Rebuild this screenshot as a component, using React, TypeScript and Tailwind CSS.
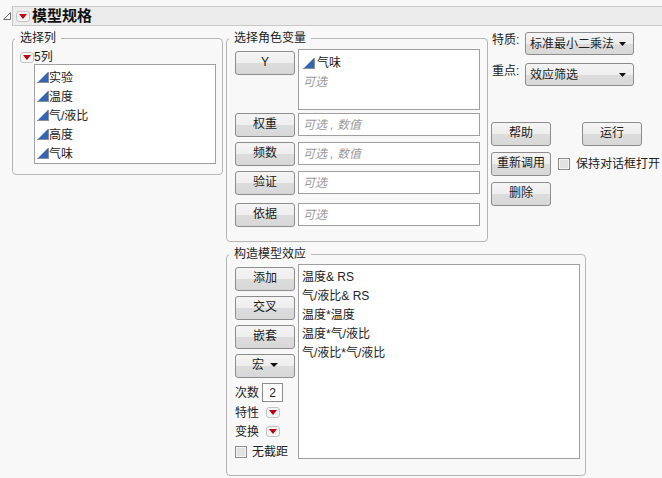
import type { ReactNode } from 'react'

const font = '[font-family:"Liberation_Sans","Noto_Sans_CJK_SC",sans-serif]'

function RedButton({ className = '' }: { className?: string }): React.JSX.Element {
  return (
    <span
      className={`flex h-[11px] w-[14px] shrink-0 items-center justify-center rounded-[3px] border border-[#c4c4c4] bg-[#f4f4f4] ${className}`}
    >
      <svg width="8" height="5" viewBox="0 0 8 5">
        <path d="M0 0h8L4 5z" fill="#c00010" />
      </svg>
    </span>
  )
}

function ColIcon(): React.JSX.Element {
  return (
    <svg width="12" height="11" viewBox="0 0 12 11" className="shrink-0">
      <path d="M0 11 11 0v11z" fill="#3265b4" />
      <path d="M11 0h1v11H0v-1h11z" fill="#8a8f98" />
    </svg>
  )
}

function Btn({ children, className = '' }: { children: ReactNode; className?: string }): React.JSX.Element {
  return (
    <div
      className={`flex h-6 w-[60px] shrink-0 items-center justify-center rounded-[3px] border border-[#8c8c8c] bg-[linear-gradient(#f4f4f4_0%,#eeeeee_50%,#dcdcdc_52%,#d8d8d8_100%)] pb-[3px] text-xs text-[#1a1a1a] ${className}`}
    >
      {children}
    </div>
  )
}

function Panel({
  title,
  className,
  children,
}: {
  title: string
  className: string
  children: ReactNode
}): React.JSX.Element {
  return (
    <div className={`relative rounded-[4px] border border-[#b4b4b4] ${className}`}>
      <span className="absolute top-[-10px] left-[2px] bg-[#f8f8f8] pr-[5px] pl-[5px] text-xs leading-[18px] text-[#222]">
        {title}
      </span>
      {children}
    </div>
  )
}

function Slot({ text, className = '' }: { text: string; className?: string }): React.JSX.Element {
  return (
    <div
      className={`flex h-[23px] w-[182px] items-center border border-[#a0a0a0] bg-white pl-[4px] text-xs text-[#9a9a9a] italic ${className}`}
    >
      {text}
    </div>
  )
}

function CheckBox(): React.JSX.Element {
  return (
    <span className="block h-3 w-3 shrink-0 border border-[#8c8c8c] bg-[#e2e2e2] shadow-[inset_0_0_0_1px_#f4f4f4]" />
  )
}

function Select({ text, className = '' }: { text: string; className?: string }): React.JSX.Element {
  return (
    <div
      className={`flex h-[23px] w-[109px] items-center justify-between rounded-[3px] border border-[#8c8c8c] bg-[linear-gradient(#f4f4f4_0%,#eeeeee_50%,#dcdcdc_52%,#d8d8d8_100%)] pr-[7px] pl-[4px] text-xs text-[#222] ${className}`}
    >
      <span>{text}</span>
      <svg width="7" height="4" viewBox="0 0 7 4">
        <path d="M0 0h7L3.5 4z" fill="#111" />
      </svg>
    </div>
  )
}

const columns = ['实验', '温度', '气/液比', '高度', '气味']
const effects = ['温度& RS', '气/液比& RS', '温度*温度', '温度*气/液比', '气/液比*气/液比']

export default function App(): React.JSX.Element {
  return (
    <div className={`h-[478px] w-[662px] overflow-hidden bg-[#f8f8f8] pt-[6px] ${font}`}>
      {/* title bar */}
      <div className="flex items-center">
        <svg width="10" height="10" viewBox="0 0 10 10" className="ml-[2px] shrink-0">
          <path d="M8.5 1.5v7h-7z" fill="none" stroke="#707070" />
        </svg>
        <div className="flex h-[20px] flex-1 items-center border border-r-0 border-[#c8c8c8] bg-[#ececec] pl-[3px]">
          <RedButton />
          <span className="ml-[2px] text-[15px] leading-[18px] font-bold text-[#111]">模型规格</span>
        </div>
      </div>

      <div className="mt-[12px] flex items-start pl-[12px]">
        {/* column picker */}
        <Panel title="选择列" className="h-[137px] w-[211px] shrink-0">
          <div className="mt-[11px] ml-[7px] flex items-center">
            <RedButton />
            <span className="text-xs leading-[14px] text-[#222]">5列</span>
          </div>
          <div className="ml-[21px] h-[100px] w-[182px] border border-[#a0a0a0] bg-white pt-[3px] pl-[2px]">
            {columns.map((name) => (
              <div key={name} className="flex h-[19px] items-center text-xs text-[#222]">
                <ColIcon />
                <span>{name}</span>
              </div>
            ))}
          </div>
        </Panel>

        <div className="ml-[3px] flex w-[360px] shrink-0 flex-col">
          {/* role variables */}
          <Panel title="选择角色变量" className="h-[204px] w-[262px]">
            <div className="mt-[10px] ml-[8px] flex flex-col">
              <div className="flex gap-[3px]">
                <Btn className="mt-[2px]">Y</Btn>
                <div className="h-[61px] w-[182px] border border-[#a0a0a0] bg-white pt-[5px] pl-[4px]">
                  <div className="flex items-center text-xs text-[#222]">
                    <ColIcon />
                    <span className="ml-[2px]">气味</span>
                  </div>
                  <div className="mt-[3px] text-xs text-[#9a9a9a] italic">可选</div>
                </div>
              </div>
              <div className="mt-[3px] flex gap-[3px]">
                <Btn>权重</Btn>
                <Slot text="可选 , 数值" />
              </div>
              <div className="mt-[5px] flex gap-[3px]">
                <Btn>频数</Btn>
                <Slot text="可选 , 数值" />
              </div>
              <div className="mt-[5px] flex gap-[3px]">
                <Btn>验证</Btn>
                <Slot text="可选" />
              </div>
              <div className="mt-[8px] flex gap-[3px]">
                <Btn>依据</Btn>
                <Slot text="可选" />
              </div>
            </div>
          </Panel>

          {/* model effects */}
          <Panel title="构造模型效应" className="mt-[12px] h-[222px] w-[360px]">
            <div className="mt-[9px] ml-[8px] flex gap-[3px]">
              <div className="flex w-[60px] shrink-0 flex-col">
                <div className="mt-[3px] flex flex-col gap-[5px]">
                  <Btn>添加</Btn>
                  <Btn>交叉</Btn>
                  <Btn>嵌套</Btn>
                  <Btn>
                    <span>宏</span>
                    <svg width="8" height="4" viewBox="0 0 8 4" className="ml-[6px]">
                      <path d="M0 0h8L4 4z" fill="#111" />
                    </svg>
                  </Btn>
                </div>
                <div className="mt-[5px] flex items-center text-xs text-[#222]">
                  <span>次数</span>
                  <span className="ml-[3px] flex h-[19px] w-[21px] items-center justify-center border border-[#8c8c8c] bg-white">
                    2
                  </span>
                </div>
                <div className="mt-[1px] flex h-[19px] items-center text-xs text-[#222]">
                  <span>特性</span>
                  <RedButton className="ml-[7px]" />
                </div>
                <div className="flex h-[19px] items-center text-xs text-[#222]">
                  <span>变换</span>
                  <RedButton className="ml-[7px]" />
                </div>
                <div className="mt-[3px] flex items-center text-xs text-[#222]">
                  <CheckBox />
                  <span className="ml-[5px] whitespace-nowrap">无截距</span>
                </div>
              </div>
              <div className="h-[195px] w-[282px] border border-[#a0a0a0] bg-white pt-[3px] pl-[3px]">
                {effects.map((e) => (
                  <div key={e} className="h-[19px] text-xs leading-[19px] text-[#222]">
                    {e}
                  </div>
                ))}
              </div>
            </div>
          </Panel>
        </div>

        {/* right side actions */}
        <div className="ml-[-95px] flex shrink-0 flex-col">
          <div className="mt-[-6px] flex items-start">
            <span className="ml-[1px] w-[33px] text-xs leading-[16px] text-[#222]">特质:</span>
            <Select text="标准最小二乘法" />
          </div>
          <div className="mt-[8px] flex items-start">
            <span className="ml-[1px] w-[33px] text-xs leading-[16px] text-[#222]">重点:</span>
            <Select text="效应筛选" />
          </div>
          <div className="mt-[36px] flex gap-[31px]">
            <Btn>帮助</Btn>
            <Btn>运行</Btn>
          </div>
          <div className="mt-[6px] flex items-center">
            <Btn>重新调用</Btn>
            <span className="ml-[7px]">
              <CheckBox />
            </span>
            <span className="ml-[6px] text-xs whitespace-nowrap text-[#222]">保持对话框打开</span>
          </div>
          <Btn className="mt-[6px]">删除</Btn>
        </div>
      </div>
    </div>
  )
}
